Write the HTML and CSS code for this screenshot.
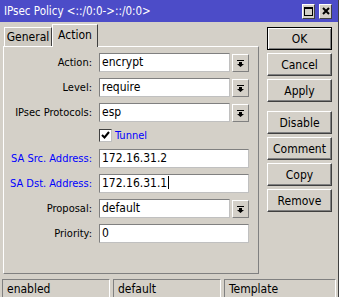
FILE: index.html
```html
<!DOCTYPE html>
<html lang="en">
<head>
    <meta charset="UTF-8">
    <title>IPsec Policy</title>
    <link rel="stylesheet" href="styles.css">
</head>
<body>
    <div class="window">
        <div class="titlebar">
            <span class="title">IPsec Policy &lt;::/0:0-&gt;::/0:0&gt;</span>
            <div class="title-buttons">
                <span class="tbtn">
                    <svg width="9" height="9" viewBox="0 0 9 9"><rect x="0.5" y="0.5" width="8" height="8" fill="none" stroke="#000"/><rect x="0" y="0" width="9" height="2" fill="#000"/></svg>
                </span>
                <span class="tbtn">
                    <svg width="8" height="8" viewBox="0 0 8 8"><path d="M1 1 L7 7 M7 1 L1 7" stroke="#000" stroke-width="2"/></svg>
                </span>
            </div>
        </div>

        <div class="content">
            <div class="dialog">
                <div class="tabs">
                    <div class="tab">General</div>
                    <div class="tab active">Action</div>
                </div>
                <div class="panel">
                    <div class="form">
                        <label>Action:</label>
                        <div class="field"><div class="input">encrypt</div><span class="drop"><svg width="7" height="7" viewBox="0 0 7 7"><rect x="0" y="0" width="7" height="1" fill="#000"/><path d="M2 2 H5 V4 H7 L3.5 7 L0 4 H2 Z" fill="#000"/></svg></span></div>

                        <label>Level:</label>
                        <div class="field"><div class="input">require</div><span class="drop"><svg width="7" height="7" viewBox="0 0 7 7"><rect x="0" y="0" width="7" height="1" fill="#000"/><path d="M2 2 H5 V4 H7 L3.5 7 L0 4 H2 Z" fill="#000"/></svg></span></div>

                        <label>IPsec Protocols:</label>
                        <div class="field"><div class="input">esp</div><span class="drop"><svg width="7" height="7" viewBox="0 0 7 7"><rect x="0" y="0" width="7" height="1" fill="#000"/><path d="M2 2 H5 V4 H7 L3.5 7 L0 4 H2 Z" fill="#000"/></svg></span></div>

                        <span></span>
                        <div class="check-row">
                            <span class="checkbox"><svg width="9" height="9" viewBox="0 0 9 9"><path d="M1 4 L3.5 6.5 L8 1" fill="none" stroke="#000" stroke-width="2"/></svg></span>
                            <span class="blue">Tunnel</span>
                        </div>

                        <label class="blue">SA Src. Address:</label>
                        <div class="field"><div class="input">172.16.31.2</div></div>

                        <label class="blue">SA Dst. Address:</label>
                        <div class="field"><div class="input">172.16.31.1<span class="caret"></span></div></div>

                        <label>Proposal:</label>
                        <div class="field"><div class="input">default</div><span class="drop"><svg width="7" height="7" viewBox="0 0 7 7"><rect x="0" y="0" width="7" height="1" fill="#000"/><path d="M2 2 H5 V4 H7 L3.5 7 L0 4 H2 Z" fill="#000"/></svg></span></div>

                        <label>Priority:</label>
                        <div class="field"><div class="input">0</div></div>
                    </div>
                </div>
            </div>

            <div class="buttons">
                <button class="button default">OK</button>
                <button class="button">Cancel</button>
                <button class="button">Apply</button>
                <button class="button spaced">Disable</button>
                <button class="button">Comment</button>
                <button class="button">Copy</button>
                <button class="button">Remove</button>
            </div>
        </div>

        <div class="statusbar">
            <div class="status-cell">enabled</div>
            <div class="status-cell">default</div>
            <div class="status-cell wide">Template</div>
        </div>
    </div>
</body>
</html>
```

FILE: styles.css
```css
body {
    margin: 0;
    font-family: 'DejaVu Sans Condensed', 'Liberation Sans', sans-serif;
    font-size: 11px;
    color: #000;
    background: #d4d0c8;
}
.window {
    width: 339px;
    height: 297px;
    background: #d4d0c8;
    box-sizing: border-box;
    border-right: 1px solid #404040;
}
.titlebar {
    height: 22px;
    background: #4c4cc8;
    display: flex;
    align-items: center;
    justify-content: space-between;
    padding: 0 6px 0 4px;
}
.title {
    color: #fff;
    font-size: 11.5px;
}
.title-buttons {
    display: flex;
    gap: 4px;
}
.tbtn {
    width: 13px;
    height: 15px;
    box-sizing: border-box;
    background: #d4d0c8;
    border: 1px solid;
    border-color: #fff #404040 #404040 #fff;
    display: flex;
    align-items: center;
    justify-content: center;
}
.content {
    display: flex;
    padding: 2px 0 0 3px;
    height: 252px;
}
.dialog {
    width: 256px;
}
.tabs {
    display: flex;
    height: 22px;
    align-items: flex-end;
    padding-left: 1px;
    position: relative;
    z-index: 1;
}
.tab {
    height: 19px;
    box-sizing: border-box;
    padding-top: 2px;
    text-align: center;
    font-size: 12px;
    border: 1px solid;
    border-color: #fff #404040 transparent #fff;
    border-bottom: none;
    background: #cdc9c1;
    width: 48px;
}
.tab.active {
    height: 23px;
    margin-bottom: -1px;
    background: #d4d0c8;
    padding-top: 3px;
    width: 46px;
}
.panel {
    height: 228px;
    box-sizing: border-box;
    border: 1px solid;
    border-color: #fff #808080 #808080 #fff;
    padding: 6px 0 0 0;
}
.form {
    display: grid;
    grid-template-columns: 88px 150px;
    column-gap: 7px;
    row-gap: 6px;
    align-items: center;
}
.form label {
    text-align: right;
}
.blue {
    color: #0000ff;
}
.field {
    display: flex;
    gap: 2px;
}
.input {
    flex: 1;
    height: 19px;
    box-sizing: border-box;
    background: #fff;
    border: 1px solid;
    border-color: #808080 #c0c0c0 #c0c0c0 #808080;
    padding: 0 2px;
    line-height: 17px;
    font-size: 12px;
    white-space: nowrap;
}
.caret {
    display: inline-block;
    width: 1px;
    height: 13px;
    background: #000;
    vertical-align: -2px;
    margin-left: 1px;
}
.drop {
    width: 17px;
    height: 18px;
    margin-top: 1px;
    box-sizing: border-box;
    border: 1px solid;
    border-color: #fff #808080 #808080 #fff;
    display: flex;
    align-items: center;
    justify-content: center;
}
.check-row {
    display: flex;
    align-items: center;
    gap: 3px;
    height: 15px;
}
.checkbox {
    width: 13px;
    height: 13px;
    box-sizing: border-box;
    background: #fff;
    border: 1px solid;
    border-color: #404040 #c0c0c0 #c0c0c0 #404040;
    display: flex;
    align-items: center;
    justify-content: center;
}
.buttons {
    display: flex;
    flex-direction: column;
    gap: 3px;
    margin: 3px 0 0 8px;
}
.button {
    width: 65px;
    height: 23px;
    box-sizing: border-box;
    background: #d4d0c8;
    border: 1px solid;
    border-color: #fff #404040 #404040 #fff;
    box-shadow: inset -1px -1px #808080;
    font-family: inherit;
    font-size: 12px;
    padding: 0;
}
.button.default {
    border: 1px solid #000;
    box-shadow: inset 1px 1px #fff, inset -1px -1px #808080;
}
.button.spaced {
    margin-top: 6px;
}
.statusbar {
    display: flex;
    gap: 3px;
    padding: 3px 0 0 2px;
}
.status-cell {
    width: 108px;
    height: 20px;
    box-sizing: border-box;
    border: 1px solid;
    border-color: #808080 #fff #fff #808080;
    padding: 0 4px;
    line-height: 18px;
    font-size: 12px;
}
.status-cell.wide {
    width: 112px;
}
```
